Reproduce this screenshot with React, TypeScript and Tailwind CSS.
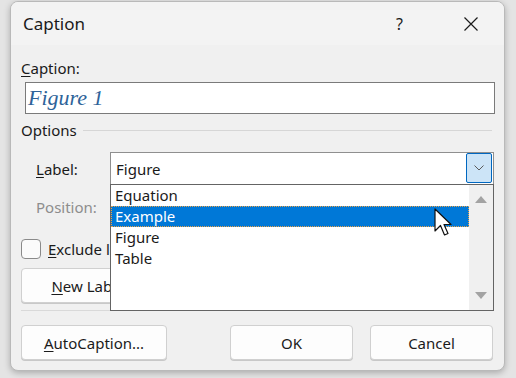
import React from "react";

const font = { fontFamily: '"Noto Sans", "Open Sans", sans-serif' };

function Button({ children, className = "" }: { children: React.ReactNode; className?: string }) {
  return (
    <button
      className={`h-[35px] rounded-[4px] border border-[#d0d0d0] bg-[#fdfdfd] text-[15px] text-[#1b1b1b] shadow-[0_1px_0_#c8c8c8] ${className}`}
    >
      {children}
    </button>
  );
}

export default function App() {
  return (
    <div className="w-[516px] h-[378px] bg-[#e4e4e4] pt-[1px] pl-[10px] overflow-hidden" style={font}>
      {/* dialog */}
      <div className="relative w-[495px] h-[370px] rounded-lg border border-[#b9b9b9] bg-[#f0f0f0] shadow-[0_2px_6px_rgba(0,0,0,0.25)] overflow-hidden">
        {/* title bar */}
        <div className="h-[43px] bg-[#f3f3f3] flex items-center pl-[12px] text-[17px] text-[#1a1a1a]">
          <span>Caption</span>
          <span className="ml-[311px] text-[16px]">?</span>
          <svg className="ml-[61px]" width="14" height="14" viewBox="0 0 14 14" stroke="#1a1a1a" strokeWidth="1.2">
            <path d="M0.5 0.5 L13.5 13.5 M13.5 0.5 L0.5 13.5" />
          </svg>
        </div>

        {/* body */}
        <div className="px-[10px] text-[15px] leading-[20px] text-[#1a1a1a]">
          <div className="mt-[13px]">
            <u className="underline-offset-2">C</u>aption:
          </div>
          <div className="mt-[4px] ml-[4px] w-[470px] h-[32px] border border-[#7a7a7a] bg-white flex items-center pl-[2px]">
            <span className="text-[22px] italic text-[#2e6399]" style={{ fontFamily: '"Liberation Serif", serif' }}>
              Figure 1
            </span>
          </div>

          <div className="mt-[6px] flex items-center">
            <span>Options</span>
            <div className="flex-1 h-px bg-[#d6d6d6] ml-[6px] mr-[2px]" />
          </div>

          <div className="mt-[12px] flex items-center">
            <span className="w-[89px] pl-[15px]">
              <u className="underline-offset-2">L</u>abel:
            </span>
            <div className="relative w-[384px] h-[33px] border border-[#8f8f8f] bg-white flex items-center">
              <span className="pl-[5px]">Figure</span>
              <div className="absolute right-[1px] top-[0px] w-[26px] h-[30px] rounded-[2px] border border-[#0067c0] bg-[#cce4f7] flex items-center justify-center">
                <svg width="10" height="6" viewBox="0 0 10 6" fill="none" stroke="#5a5a5a" strokeWidth="1">
                  <path d="M0.5 0.5 L5 5 L9.5 0.5" />
                </svg>
              </div>

              {/* dropdown list */}
              <div className="absolute left-[-1px] top-[31px] w-[384px] h-[127px] border border-[#646464] bg-white z-10 flex">
                <div className="flex-1">
                  {["Equation", "Example", "Figure", "Table"].map((item) => (
                    <div
                      key={item}
                      className={
                        item === "Example"
                          ? "h-[21px] leading-[21px] pl-[4px] bg-[#0078d7] text-white outline-1 outline-dotted outline-[#e8a24a] -outline-offset-1"
                          : "h-[21px] leading-[21px] pl-[4px]"
                      }
                    >
                      {item}
                    </div>
                  ))}
                </div>
                <div className="w-[24px] bg-[#f0f0f0] flex flex-col items-center justify-between py-[10px]">
                  <svg width="14" height="8" viewBox="0 0 14 8">
                    <path d="M1 8 L7 1 L13 8 Z" fill="#a3a3a3" />
                  </svg>
                  <svg width="14" height="8" viewBox="0 0 14 8">
                    <path d="M1 0 L7 7 L13 0 Z" fill="#a3a3a3" />
                  </svg>
                </div>

                {/* mouse cursor */}
                <svg className="absolute left-[323px] top-[23px]" width="20" height="30" viewBox="0 0 20 30">
                  <path
                    d="M1 1 L1 23 L6.5 17.5 L10.5 27 L14 25.5 L10 16.5 L17 16.5 Z"
                    fill="white"
                    stroke="#111"
                    strokeWidth="1.2"
                    strokeLinejoin="round"
                  />
                </svg>
              </div>
            </div>
          </div>

          <div className="mt-[12px] pl-[15px] text-[#8d8d8d]">Position:</div>

          <div className="mt-[22px] flex items-center">
            <div className="w-[20px] h-[20px] rounded-[4px] border border-[#8a8a8a] bg-[#fbfbfb]" />
            <span className="ml-[7px]">
              <u className="underline-offset-2">E</u>xclude label from caption
            </span>
          </div>

          <div className="mt-[9px] flex">
            <Button className="w-[146px]">
              <u className="underline-offset-2">N</u>ew Label...
            </Button>
          </div>

          <div className="mt-[7px] h-px bg-[#d9d9d9]" />

          <div className="mt-[14px] flex">
            <Button className="w-[146px]">
              <u className="underline-offset-2">A</u>utoCaption...
            </Button>
            <Button className="ml-[63px] w-[123px] border-[#b9cbe0]">OK</Button>
            <Button className="ml-[17px] w-[123px]">Cancel</Button>
          </div>
        </div>
      </div>
    </div>
  );
}
